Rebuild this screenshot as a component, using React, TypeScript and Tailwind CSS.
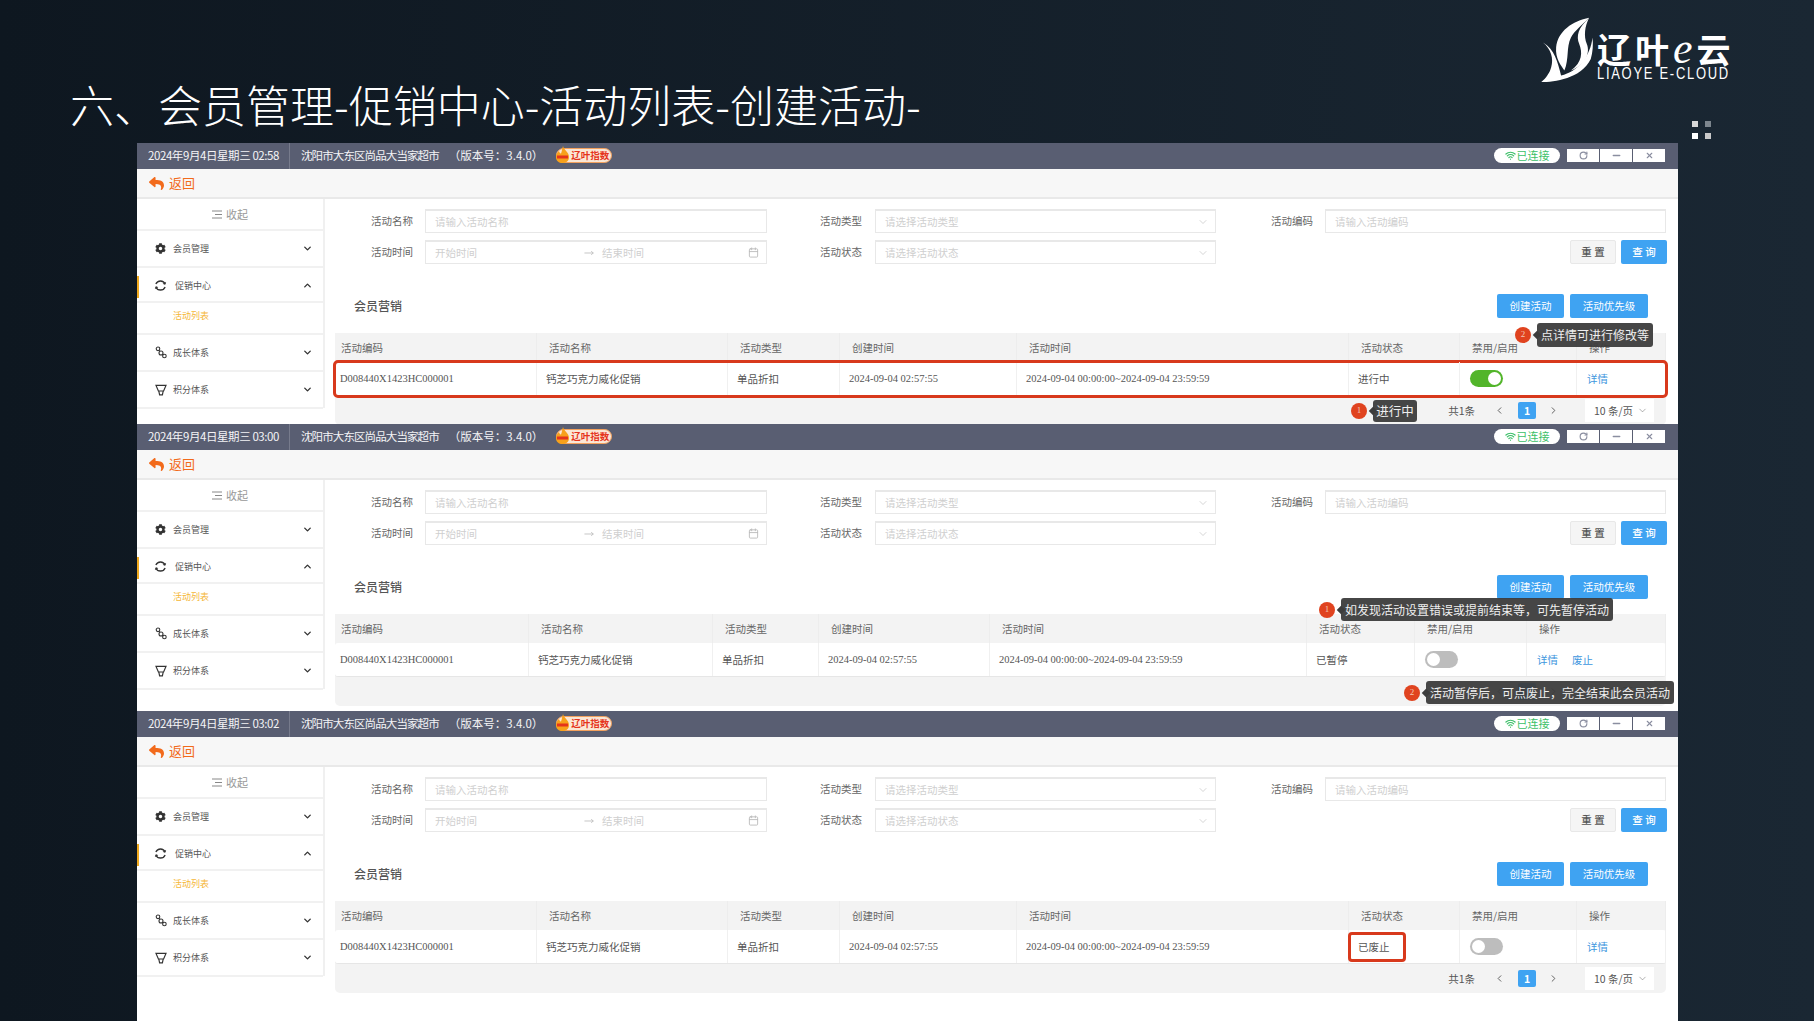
import React from 'react';
import { ChevronDown, ChevronUp, ChevronLeft, ChevronRight, Wifi, RotateCw, Minus, X, Calendar, MoveRight } from 'lucide-react';
import { FaCog, FaReply } from 'react-icons/fa';

const Tip = ({ n, text, pos, box, big }: { n: number; text: string; pos: string; box: string; big?: boolean }) => (
  <div className={`absolute flex items-center ${pos}`}>
    <div className="w-[16px] h-[16px] rounded-full bg-[#e0431f] text-[#f3c9b8] text-[9px] flex items-center justify-center font-['Liberation_Serif',serif] shrink-0">{n}</div>
    <div className={`ml-[6px] relative rounded-[3px] bg-[#3c3c3c]/95 text-[#efefef] flex items-center justify-center whitespace-nowrap ${big ? 'text-[12.5px]' : 'text-[12px]'} ${box}`}>
      <span className="absolute left-[-3px] top-1/2 -mt-[3px] w-[6px] h-[6px] bg-[#3c3c3c] rotate-45" />
      <span className="relative">{text}</span>
    </div>
  </div>
);

const Field = ({ label, labelW, gap, children }: { label: string; labelW: string; gap: string; children: React.ReactNode }) => (
  <div className="flex items-center shrink-0">
    <div className={`text-[10.5px] text-[#666] text-right ${labelW} ${gap}`}>{label}</div>
    {children}
  </div>
);

const Box = ({ w, text, select }: { w: string; text: string; select?: boolean }) => (
  <div className={`${w} h-[24px] border border-[#e8e8e8] border-t-2 bg-white flex items-center justify-between pl-[9px] pr-[6px] text-[10.5px] text-[#cfcfcf]`}>
    <span>{text}</span>
    {select && <ChevronDown size={12} strokeWidth={1} className="text-[#aaa]" />}
  </div>
);

const SideItem = ({ icon, label, up, active, ml }: { icon: React.ReactNode; label: string; up?: boolean; active?: boolean; ml?: string }) => (
  <div className={`flex items-center border-b-2 border-[#f1f1f1] ${active ? 'h-[33px]' : 'h-[37px]'} pl-[16px] pr-[10px] relative`}>
    {active && <span className="absolute left-0 top-[6px] w-[2px] h-[22px] bg-[#f0a91e]" />}
    <span className="w-[15px] flex justify-center text-[#333]">{icon}</span>
    <span className={`text-[9px] text-[#555] ${ml ?? 'ml-[5px]'}`}>{label}</span>
    <span className="ml-auto text-[#333]">{up ? <ChevronUp size={11} strokeWidth={3} /> : <ChevronDown size={11} strokeWidth={3} />}</span>
  </div>
);

const Spin = () => (
  <svg width="13" height="13" viewBox="0 0 14 14" fill="none" stroke="#333" strokeWidth="1.4">
    <path d="M2 5.5A5.4 5.4 0 0 1 12 5.5" />
    <path d="M12 8.5A5.4 5.4 0 0 1 2 8.5" />
    <path d="M12.6 3.2 12 5.8 9.6 5" fill="#333" strokeWidth="0.5" />
    <path d="M1.4 10.8 2 8.2 4.4 9" fill="#333" strokeWidth="0.5" />
  </svg>
);
const Growth = () => (
  <svg width="12" height="13" viewBox="0 0 12 13" fill="none" stroke="#333" strokeWidth="1.1">
    <circle cx="3" cy="2.8" r="1.8" />
    <circle cx="6" cy="7" r="2" />
    <circle cx="9.4" cy="10" r="1.8" />
    <path d="M4 4.3 5 5.4M7.4 8.4 8.4 9" />
  </svg>
);
const Cup = () => (
  <svg width="12" height="12" viewBox="0 0 12 12" fill="none" stroke="#333" strokeWidth="1.2">
    <path d="M1 1.4H11L8.6 7H3.4Z" />
    <path d="M3.8 7 4.6 10.8H7.4L8.2 7" />
  </svg>
);

const Panel = ({ time, h, cols, status, on, links, redRow, redStatus, switchW, tips }: {
  time: string; h: string; cols: string; status: string; on?: boolean; links: string[]; redRow?: boolean; redStatus?: boolean; switchW?: string; tips?: React.ReactNode;
}) => {
  const heads = ['活动编码', '活动名称', '活动类型', '创建时间', '活动时间', '活动状态', '禁用/启用', '操作'];
  const cell = 'flex items-center border-r border-[#f0f0f0] text-[10.5px] text-[#555]';
  const serif = "font-['Liberation_Serif','Noto_Sans_CJK_SC',serif]";
  return (
    <div className={`relative w-[1541px] ${h} bg-white overflow-hidden`}>
      <div className="h-[26px] bg-[#595e72] flex items-center text-[#f4f4f6] text-[11.5px]">
        <div className="w-[153px] h-full pl-[11px] flex items-center border-r border-[#777b8c] whitespace-nowrap tracking-[-0.42px]">{time}</div>
        <div className="ml-[11px] whitespace-nowrap tracking-[-0.9px]">沈阳市大东区尚品大当家超市</div>
        <div className="ml-[10px] whitespace-nowrap">（版本号：3.4.0）</div>
        <div className="ml-[13px] relative flex items-center h-[15px] w-[56px] -mt-[1px] pl-[14px] rounded-full bg-[#fbe7d5] border border-[#f3a15e] text-[#e5341c] text-[9.5px] font-bold whitespace-nowrap">
          <svg className="absolute left-[-2px] top-[-3px]" width="15" height="18" viewBox="0 0 15 18"><path d="M8 0C9 4 14 6 14 11C14 15 11 17 7.5 17C4 17 1 15 1 11C1 8 3 6 4 5C4.500 7 5.500 7.500 6 7.500C7 5 7 3 8 0Z" fill="#f7a11b" /><rect x="2" y="9.500" width="11" height="3" fill="#e5341c" /></svg>
          辽叶指数
        </div>
        <div className="ml-auto flex items-center pr-[13px] -mt-[1px]">
          <div className="w-[66px] h-[15px] rounded-full bg-white flex items-center justify-center text-[#3cbf68] text-[11px] gap-[1px] whitespace-nowrap">
            <Wifi size={11} strokeWidth={2.5} />已连接
          </div>
          <div className="ml-[7px] flex gap-[1px]">
            <div className="w-[32px] h-[13px] bg-white flex items-center justify-center text-[#8a8ea0]"><RotateCw size={9} strokeWidth={3} /></div>
            <div className="w-[32px] h-[13px] bg-white flex items-center justify-center text-[#8a8ea0]"><Minus size={11} strokeWidth={3} /></div>
            <div className="w-[32px] h-[13px] bg-white flex items-center justify-center text-[#8a8ea0]"><X size={9} strokeWidth={3} /></div>
          </div>
        </div>
      </div>
      <div className="h-[30px] bg-[#f7f7f7] border-b-2 border-[#e9e9e9] flex items-center pl-[12px] text-[#f26a1b] text-[13px]">
        <FaReply size={15} />
        <span className="ml-[5px]">返回</span>
      </div>
      <div className="flex">
        <div className="w-[188px] shrink-0 border-r-2 border-[#f0f0f0] h-[209px]">
          <div className="h-[32px] border-b-2 border-[#f1f1f1] flex items-center justify-center text-[11px] text-[#999] gap-[4px]">
            <svg width="10" height="9" viewBox="0 0 10 9" stroke="#888" strokeWidth="1"><path d="M0 1H10M3 4.500H10M0 8H10" /></svg>
            收起
          </div>
          <SideItem icon={<FaCog size={11} />} label="会员管理" />
          <div className="h-[2px]" />
          <SideItem active icon={<Spin />} label="促销中心" ml="ml-[7px]" up />
          <div className="h-[32px] border-b-2 border-[#f1f1f1] pl-[36px] pt-[7px] text-[9px] leading-[12px] text-[#f5b638]">活动列表</div>
          <SideItem icon={<Growth />} label="成长体系" />
          <SideItem icon={<Cup />} label="积分体系" />
        </div>
        <div className="flex-1 pt-[10px] pr-[12px] pl-[10px]">
          <div className="-ml-[10px] flex flex-col gap-[7px]">
            <div className="flex">
              <Field label="活动名称" labelW="w-[88px]" gap="mr-[12px]"><Box w="w-[342px]" text="请输入活动名称" /></Field>
              <Field label="活动类型" labelW="w-[95px]" gap="mr-[13px]"><Box w="w-[341px]" text="请选择活动类型" select /></Field>
              <Field label="活动编码" labelW="w-[97px]" gap="mr-[12px]"><Box w="w-[341px]" text="请输入活动编码" /></Field>
            </div>
            <div className="flex">
              <Field label="活动时间" labelW="w-[88px]" gap="mr-[12px]">
                <div className="w-[342px] h-[24px] border border-[#e8e8e8] border-t-2 flex items-center pl-[9px] pr-[7px] text-[10.5px] text-[#cfcfcf]">
                  <span>开始时间</span>
                  <MoveRight size={10} className="ml-[107px] text-[#bbb]" />
                  <span className="ml-[8px]">结束时间</span>
                  <Calendar size={11} className="ml-auto text-[#bbb]" />
                </div>
              </Field>
              <Field label="活动状态" labelW="w-[95px]" gap="mr-[13px]"><Box w="w-[341px]" text="请选择活动状态" select /></Field>
              <div className="ml-auto -mr-[1px] flex gap-[5px]">
                <div className="w-[46px] h-[24px] rounded-[2px] bg-[#f5f5f5] border border-[#e8e8e8] flex items-center justify-center text-[10.5px] font-medium text-[#555]">重 置</div>
                <div className="w-[46px] h-[24px] rounded-[2px] bg-[#3fa3f2] flex items-center justify-center text-[10.5px] font-medium text-white">查 询</div>
              </div>
            </div>
          </div>
          <div className="mt-[30px] flex items-center pl-[19px] pr-[18px]">
            <div className="text-[12px] font-medium text-[#555]">会员营销</div>
            <div className="ml-auto flex gap-[6px]">
              <div className="w-[67px] h-[24px] rounded-[2px] bg-[#3fa3f2] flex items-center justify-center text-[10.5px] text-white">创建活动</div>
              <div className="w-[78px] h-[24px] rounded-[2px] bg-[#3fa3f2] flex items-center justify-center text-[10.5px] text-white">活动优先级</div>
            </div>
          </div>
          <div className="mt-[15px] rounded-b-[5px] bg-[#f3f3f3]">
            <div className={`grid ${cols} h-[29px]`}>
              {heads.map((t, i) => (
                <div key={t} className={`flex items-center border-r border-[#ededed] text-[10.5px] text-[#666] ${i === 0 ? 'pl-[6px]' : 'pl-[12px]'}`}>{t}</div>
              ))}
            </div>
            <div className={`grid ${cols} h-[34px] bg-white border-b border-[#e6e6e6] rounded-[3px] ${redRow ? 'outline-[3px] outline-[#d8391c] -outline-offset-1' : ''}`}>
              <div className={`${cell} ${serif} pl-[5px]`}>D008440X1423HC000001</div>
              <div className={`${cell} pl-[9px]`}>钙芝巧克力威化促销</div>
              <div className={`${cell} pl-[9px]`}>单品折扣</div>
              <div className={`${cell} ${serif} pl-[9px]`}>2024-09-04 02:57:55</div>
              <div className={`${cell} ${serif} pl-[9px]`}>2024-09-04 00:00:00~2024-09-04 23:59:59</div>
              <div className={`${cell} pl-[9px] relative`}>
                {status}
                {redStatus && <span className="absolute left-[-1px] w-[58px] top-[2px] bottom-[1px] border-[3px] border-[#d8391c] rounded-[4px]" />}
              </div>
              <div className={`${cell} pl-[10px]`}>
                <div className={`${switchW ?? 'w-[33px]'} h-[17px] rounded-full flex items-center p-[2px] ${on ? 'bg-[#52b52a] justify-end' : 'bg-[#bdbdbd] justify-start'}`}>
                  <span className="w-[13px] h-[13px] rounded-full bg-white" />
                </div>
              </div>
              <div className={`${cell} pl-[10px] gap-[14px]`}>
                {links.map(l => <span key={l} className="text-[#3d96de]">{l}</span>)}
              </div>
            </div>
            <div className="h-[29px] flex items-center justify-end pr-[12px] text-[10.5px] text-[#555]">
              <span>共1条</span>
              <ChevronLeft size={11} className="ml-[19px]" />
              <span className="ml-[13px] w-[18px] h-[17px] rounded-[2px] bg-[#3fa3f2] text-white font-bold flex items-center justify-center">1</span>
              <ChevronRight size={11} className="ml-[12px]" />
              <div className="ml-[26px] w-[69px] h-[23px] bg-white flex items-center justify-between pl-[9px] pr-[6px]">
                <span>10 条/页</span><ChevronDown size={11} strokeWidth={1} />
              </div>
            </div>
          </div>
        </div>
      </div>
      {tips}
    </div>
  );
};

export default function App() {
  return (
    <div className="w-[1814px] h-[1021px] overflow-hidden bg-[linear-gradient(90deg,#0e1720,#1a2733)] font-['Noto_Sans_CJK_SC',sans-serif]">
      <div className="h-[143px] flex justify-between">
        <div className="mt-[70px] ml-[70px] h-[68px] flex items-center text-[44px] font-light text-white whitespace-nowrap">六、会员管理-促销中心-活动列表-创建活动-</div>
        <div className="mr-[83px] pt-[16px] flex flex-col items-end">
          <div className="flex items-start h-[66px] w-[191px]">
            <svg width="57" height="66" viewBox="0 0 165 200" fill="#fff" className="shrink-0">
              <path d="M145 5C95 15 50 45 45 95C42 130 60 150 70 165C85 130 75 95 90 65C100 45 125 25 145 5Z" />
              <path d="M145 5C112 35 105 60 115 85C125 110 125 140 90 165C130 150 150 115 138 85C128 60 132 30 145 5Z" />
              <path d="M5 80C30 100 38 130 30 155C26 172 14 188 0 200C40 200 120 190 150 130C156 110 158 85 155 65C150 120 110 170 60 180C50 140 40 100 5 80Z" />
            </svg>
            <div className="flex flex-col text-white items-start">
              <div className="h-[31px] mt-[17px] flex items-center text-[34px] font-bold leading-none whitespace-nowrap tracking-[4px]">辽叶<span className="italic font-normal text-[44px] font-['Liberation_Serif',serif]">e</span>云</div>
              <div className="mt-[2px] text-[13px] leading-[14px] tracking-[1.7px] font-['Liberation_Sans',sans-serif] whitespace-nowrap scale-y-120 origin-top">LIAOYE E-CLOUD</div>
            </div>
          </div>
          <div className="mt-[39px] mr-[20px] grid grid-cols-2 gap-x-[7px] gap-y-[6px]">
            <span className="w-[6px] h-[6px] bg-[#d8d8d8]" />
            <span className="w-[6px] h-[6px] bg-[#7d868e]" />
            <span className="w-[6px] h-[6px] bg-white" />
            <span className="w-[6px] h-[6px] bg-[#c9c9c9]" />
          </div>
        </div>
      </div>
      <div className="ml-[137px]">
        <Panel time="2024年9月4日星期三 02:58" h="h-[281px]" cols="grid-cols-[202px_191px_112px_177px_332px_111px_117px_89px]" status="进行中" on links={['详情']} redRow
          tips={<>
            <Tip n={2} text="点详情可进行修改等" pos="left-[1378px] top-[180px]" box="w-[116px] h-[24px]" />
            <Tip n={1} text="进行中" pos="left-[1214px] top-[257px]" box="w-[44px] h-[22px]" big />
          </>} />
        <Panel time="2024年9月4日星期三 03:00" h="h-[287px]" cols="grid-cols-[194px_184px_106px_171px_317px_108px_112px_139px]" status="已暂停" links={['详情', '废止']}
          tips={<>
            <Tip n={1} text="如发现活动设置错误或提前结束等，可先暂停活动" pos="left-[1182px] top-[174px]" box="w-[272px] h-[23px]" />
            <Tip n={2} text="活动暂停后，可点废止，完全结束此会员活动" pos="left-[1267px] top-[257px]" box="w-[248px] h-[23px]" />
          </>} />
        <Panel time="2024年9月4日星期三 03:02" h="h-[310px]" cols="grid-cols-[202px_191px_112px_177px_332px_111px_117px_89px]" status="已废止" links={['详情']} redStatus />
      </div>
    </div>
  );
}
